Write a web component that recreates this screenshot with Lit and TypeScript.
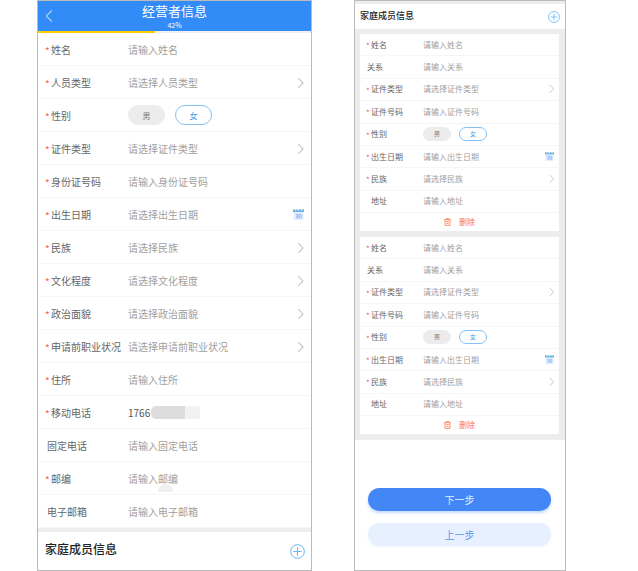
import { LitElement, html, css, svg, nothing } from "lit";
import { customElement, property } from "lit/decorators.js";
import { classMap } from "lit/directives/class-map.js";

type Kind = "text" | "select" | "date" | "gender" | "masked";

interface Field {
  id: string;
  label: string;
  kind: Kind;
  hint?: string;
  value?: string;
  required?: boolean;
  indent?: boolean;
}

const plusIcon = html`<svg class="plus" viewBox="0 0 16 16" aria-hidden="true">
  ${svg`<circle cx="8" cy="8" r="7.3"></circle><path d="M8 3.5v9M3.5 8h9"></path>`}
</svg>`;

const OPERATOR_FIELDS: Field[] = [
  { id: "name", label: "姓名", kind: "text", hint: "请输入姓名", required: true },
  { id: "person-type", label: "人员类型", kind: "select", hint: "请选择人员类型", required: true },
  { id: "gender", label: "性别", kind: "gender", required: true },
  { id: "id-type", label: "证件类型", kind: "select", hint: "请选择证件类型", required: true },
  { id: "id-number", label: "身份证号码", kind: "text", hint: "请输入身份证号码", required: true },
  { id: "birthday", label: "出生日期", kind: "date", hint: "请选择出生日期", required: true },
  { id: "nation", label: "民族", kind: "select", hint: "请选择民族", required: true },
  { id: "education", label: "文化程度", kind: "select", hint: "请选择文化程度", required: true },
  { id: "politics", label: "政治面貌", kind: "select", hint: "请选择政治面貌", required: true },
  { id: "job", label: "申请前职业状况", kind: "select", hint: "请选择申请前职业状况", required: true },
  { id: "home", label: "住所", kind: "text", hint: "请输入住所", required: true },
  { id: "mobile", label: "移动电话", kind: "masked", value: "1766", required: true },
  { id: "phone", label: "固定电话", kind: "text", hint: "请输入固定电话" },
  { id: "postcode", label: "邮编", kind: "text", hint: "请输入邮编", required: true },
  { id: "email", label: "电子邮箱", kind: "text", hint: "请输入电子邮箱" },
];

const MEMBER_FIELDS: Field[] = [
  { id: "name", label: "姓名", kind: "text", hint: "请输入姓名", required: true },
  { id: "relation", label: "关系", kind: "text", hint: "请输入关系" },
  { id: "id-type", label: "证件类型", kind: "select", hint: "请选择证件类型", required: true },
  { id: "id-number", label: "证件号码", kind: "text", hint: "请输入证件号码", required: true },
  { id: "gender", label: "性别", kind: "gender", required: true },
  { id: "birthday", label: "出生日期", kind: "date", hint: "请输入出生日期", required: true },
  { id: "nation", label: "民族", kind: "select", hint: "请选择民族", required: true },
  { id: "address", label: "地址", kind: "text", hint: "请输入地址", indent: true },
];

@customElement("form-field")
export class FormField extends LitElement {
  @property({ attribute: false }) field!: Field;

  static styles = css`
    :host {
      --row: 33px;
      --text: 10px;
      --lead: 7px;
      --star: 6px;
      --bare: 2px;
      --column: 90px;
      --end: 7px;
      --pill-width: 37px;
      --pill-height: 20px;
      --pill-gap: 10px;
      --pill-text: 8px;
      --chevron: 11px;
      --calendar: 11px;
      display: grid;
      grid-template-columns: var(--column) minmax(0, 1fr) auto;
      align-items: center;
      min-height: var(--row);
      box-sizing: border-box;
      padding-right: var(--end);
      border-bottom: 1px solid #f6f6f6;
      background: #fff;
      font-size: var(--text);
      color: #666;
    }
    :host([compact]) {
      --row: 22px;
      --text: 8px;
      --lead: 6px;
      --star: 5px;
      --bare: 1px;
      --column: 63px;
      --end: 5px;
      --pill-width: 28px;
      --pill-height: 14px;
      --pill-gap: 8px;
      --pill-text: 6px;
      --chevron: 9px;
      --calendar: 9px;
      padding-bottom: 1px;
    }
    .label {
      display: flex;
      align-items: center;
      padding-left: var(--lead);
      white-space: nowrap;
    }
    .label.bare {
      padding-left: calc(var(--lead) + var(--bare));
    }
    .label.indent {
      padding-left: calc(var(--lead) + var(--star));
    }
    .star {
      flex: none;
      width: var(--star);
      padding-top: 4px;
      color: #ff5a4a;
      line-height: 1;
    }
    .control {
      width: 100%;
      min-width: 0;
      margin: 0;
      padding: 0;
      border: 0;
      outline: 0;
      background: transparent;
      appearance: none;
      font: inherit;
      color: #a0a0a0;
    }
    .control::placeholder {
      color: #a0a0a0;
      opacity: 1;
    }
    .masked {
      display: flex;
      align-items: center;
    }
    .masked .control {
      width: 23px;
      color: #555;
    }
    .blob {
      width: 34px;
      height: 13px;
      border-radius: 5px 0 0 5px;
      background: #ddd;
    }
    .blob.light {
      width: 15px;
      border-radius: 0 2px 2px 0;
      background: #f2f2f2;
    }
    .pills {
      display: flex;
      gap: var(--pill-gap);
    }
    .pill {
      display: flex;
      align-items: center;
      justify-content: center;
      width: var(--pill-width);
      height: var(--pill-height);
      box-sizing: border-box;
      border: 1px solid #ececec;
      border-radius: 10px;
      background: #ececec;
      color: #777;
      font-size: var(--pill-text);
    }
    .pill.on {
      border-color: #82c2f4;
      background: #fff;
      color: #3d9dea;
    }
    .radio {
      position: absolute;
      opacity: 0;
      pointer-events: none;
    }
    .chevron {
      display: block;
      width: var(--chevron);
      height: var(--chevron);
      margin-right: -2px;
      fill: none;
      stroke: #c4c4c4;
    }
    .date {
      display: block;
      padding: 0;
      border: 0;
      background: none;
    }
    .calendar {
      display: block;
      width: var(--calendar);
      height: var(--calendar);
    }
  `;

  private renderControl(f: Field) {
    switch (f.kind) {
      case "select":
        return html`<select class="control" id=${f.id}>
          <option selected>${f.hint}</option>
        </select>`;
      case "gender":
        return html`<div class="pills" role="radiogroup" aria-labelledby="caption">
          <label class="pill"><input class="radio" type="radio" name="gender" />男</label>
          <label class="pill on"><input class="radio" type="radio" name="gender" checked />女</label>
        </div>`;
      case "masked":
        return html`<div class="masked">
          <input class="control" id=${f.id} type="text" .value=${f.value ?? ""} />
          <span class="blob"></span><span class="blob light"></span>
        </div>`;
      default:
        return html`<input class="control" id=${f.id} type="text" placeholder=${f.hint ?? ""} />`;
    }
  }

  private renderTail(f: Field) {
    if (f.kind === "select") {
      return html`<svg class="chevron" viewBox="0 0 10 10" aria-hidden="true">
        <path d="M3 1 7.3 5.4 3 9.8"></path>
      </svg>`;
    }
    if (f.kind === "date") {
      return html`<button class="date" type="button" aria-label="日历">
        <svg class="calendar" viewBox="0 0 11 11" aria-hidden="true">
          <rect x="0.5" y="3" width="10" height="8" fill="#e2f0fd"></rect>
          <rect x="0" y="0.3" width="11" height="2.7" fill="#5cb0f5"></rect>
          <rect x="1.6" y="0" width="1.6" height="1.8" fill="#ffe29a"></rect>
          <rect x="4.7" y="0" width="1.4" height="1.8" fill="#e4f1fb"></rect>
          <rect x="7.8" y="0" width="1.6" height="1.8" fill="#ffe29a"></rect>
          <path
            d="M2.8 5.4h2.1v3.5H2.8M3.2 7.1H5M6.2 5.4h2.1v3.5H6.2z"
            fill="none"
            stroke="#86aaf7"
            stroke-width="0.8"
          ></path>
        </svg>
      </button>`;
    }
    return nothing;
  }

  render() {
    const f = this.field;
    const classes = classMap({ label: true, bare: !f.required && !f.indent, indent: !!f.indent });
    const star = f.required ? html`<span class="star">*</span>` : nothing;
    return html`
      ${f.kind === "gender"
        ? html`<span class=${classes} id="caption">${star}${f.label}</span>`
        : html`<label class=${classes} for=${f.id}>${star}${f.label}</label>`}
      ${this.renderControl(f)}${this.renderTail(f)}
    `;
  }
}

@customElement("app-root")
export class AppRoot extends LitElement {
  @property({ type: Number }) stepsDone = 3;
  @property({ type: Number }) stepsTotal = 7;

  static styles = css`
    :host {
      display: grid;
      grid-template-columns: minmax(0, 275fr) minmax(0, 212fr);
      gap: 42px;
      padding: 0 72px 0 37px;
      background: #fff;
      font-family: "Noto Sans CJK SC", "Noto Sans", sans-serif;
    }
    .screen {
      border: 1px solid #bbb;
      background: #fff;
    }
    .bar {
      display: grid;
      grid-template-columns: 22px 1fr 22px;
      align-items: center;
      height: 30px;
      background: #338bf8;
      color: #fff;
    }
    .back {
      display: flex;
      justify-content: center;
      padding: 0;
      border: 0;
      background: none;
    }
    .arrow {
      width: 8px;
      height: 12px;
      fill: none;
      stroke: #fff;
    }
    .heading {
      padding-bottom: 2px;
      text-align: center;
    }
    .title {
      margin: 0;
      font-size: 13px;
      font-weight: 400;
      line-height: 20px;
    }
    .percent {
      margin: 0;
      font-size: 7px;
      line-height: 8px;
    }
    .track {
      height: 2px;
      background: #eef1f4;
    }
    .fill {
      height: 100%;
      background: #fc0;
    }
    .fields {
      position: relative;
    }
    .thumb {
      position: absolute;
      left: 120px;
      bottom: 36px;
      width: 15px;
      height: 8px;
      border-radius: 8px 8px 0 0;
      background: #f0f0f0;
    }
    .section {
      display: flex;
      align-items: center;
      justify-content: space-between;
      height: 38px;
      padding: 0 6px 0 7px;
      border-top: 4px solid #ededed;
    }
    .section-title {
      margin: 0;
      padding-bottom: 5px;
      font-size: 12px;
      font-weight: 500;
      color: #222;
    }
    .add {
      padding: 0;
      border: 0;
      background: none;
    }
    .plus {
      display: block;
      width: 15px;
      height: 15px;
      fill: none;
      stroke: #5ab4f7;
    }
    .section.compact {
      height: 25px;
      padding: 0 5px;
      border-top: 3px solid #ededed;
    }
    .compact .section-title {
      padding-bottom: 2px;
      font-size: 9px;
    }
    .compact .plus {
      width: 12px;
      height: 12px;
    }
    .members {
      display: grid;
      gap: 6px;
      padding: 5px 6px 6px 5px;
      background: #ededed;
    }
    .card {
      display: grid;
      grid-template-rows: repeat(8, 1fr) 18px;
      min-height: 197px;
      background: #fff;
    }
    .remove {
      display: flex;
      align-items: center;
      justify-content: center;
      gap: 8px;
      padding: 0 0 1px;
      border: 0;
      background: none;
      font: inherit;
      font-size: 8px;
      color: #ff7347;
    }
    .bin {
      width: 7px;
      height: 8px;
      fill: none;
      stroke: #ff7347;
    }
    .actions {
      display: grid;
      gap: 12px;
      padding: 48px 14px 24px 13px;
    }
    .action {
      height: 23px;
      padding: 0;
      border: 0;
      border-radius: 12px;
      font: inherit;
      font-size: 10px;
    }
    .next {
      background: #4287f5;
      box-shadow: 0 2px 3px #c4d9fb;
      color: #e6efff;
    }
    .prev {
      background: #e6f0ff;
      box-shadow: 0 1px 3px #eef4ff;
      color: #5f97f3;
    }
  `;

  private renderCard() {
    return html`<div class="card">
      ${MEMBER_FIELDS.map((f) => html`<form-field compact .field=${f}></form-field>`)}
      <button class="remove" type="button">
        <svg class="bin" viewBox="0 0 7 8" aria-hidden="true">
          <path
            d="M0.2 1.6h6.6M2.3 1.4V0.6h2.4v0.8M1 1.8v5.6h5V1.8M2.3 3.5h2.4M2.3 5.4h2.4"
            stroke-width="0.8"
          ></path>
        </svg>
        删除
      </button>
    </div>`;
  }

  render() {
    const percent = (this.stepsDone / this.stepsTotal) * 100;
    return html`
      <main class="screen">
        <header class="bar">
          <button class="back" type="button" aria-label="返回">
            <svg class="arrow" viewBox="0 0 8 12"><path d="M7 0.5 1.2 6 7 11.5"></path></svg>
          </button>
          <div class="heading">
            <h1 class="title">经营者信息</h1>
            <p class="percent">${Math.floor(percent)}%</p>
          </div>
        </header>
        <div class="track"><div class="fill" style="width: ${percent}%"></div></div>
        <div class="fields">
          ${OPERATOR_FIELDS.map((f) => html`<form-field .field=${f}></form-field>`)}
          <span class="thumb"></span>
        </div>
        <div class="section">
          <h2 class="section-title">家庭成员信息</h2>
          <button class="add" type="button" aria-label="添加">${plusIcon}</button>
        </div>
      </main>
      <section class="screen">
        <div class="section compact">
          <h2 class="section-title">家庭成员信息</h2>
          <button class="add" type="button" aria-label="添加">${plusIcon}</button>
        </div>
        <div class="members">${this.renderCard()}${this.renderCard()}</div>
        <div class="actions">
          <button class="action next" type="button">下一步</button>
          <button class="action prev" type="button">上一步</button>
        </div>
      </section>
    `;
  }
}
